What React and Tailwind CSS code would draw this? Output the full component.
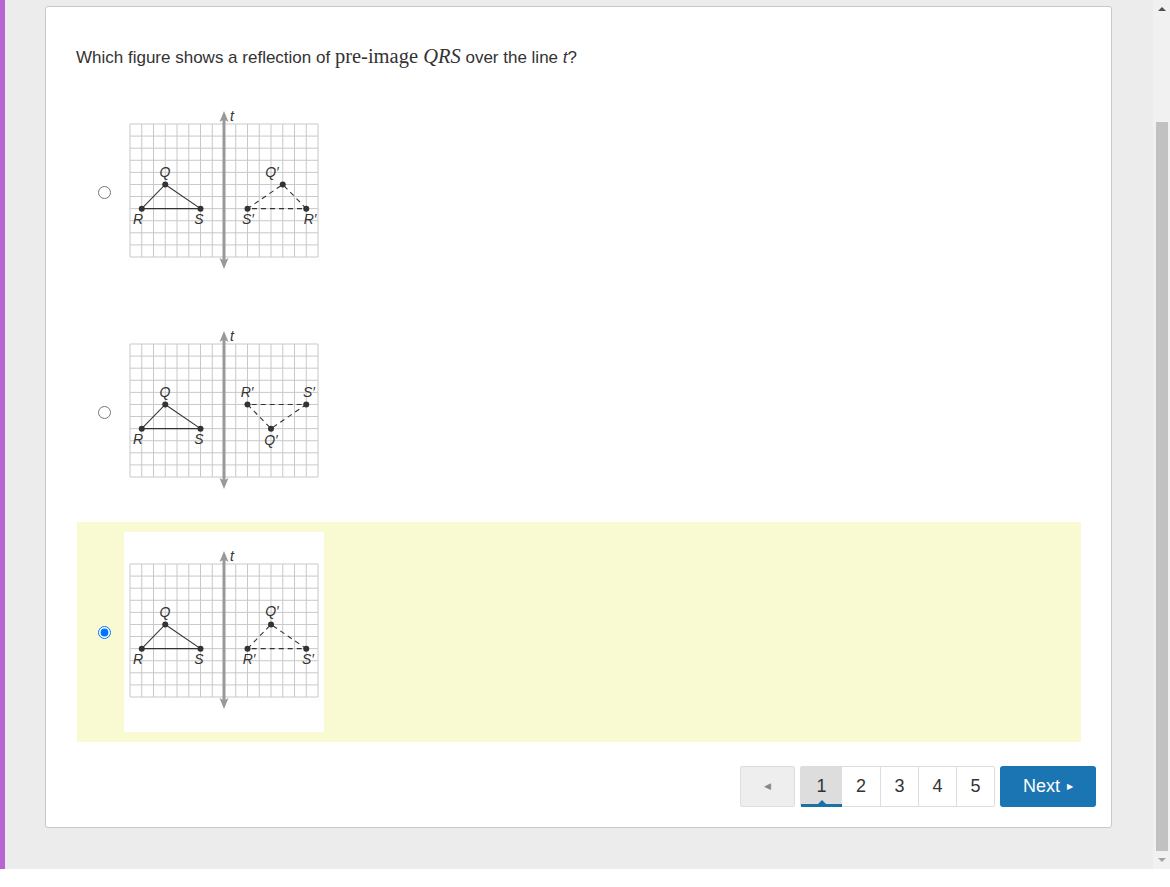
const CW = 11.75
const CH = 133 / 11
const X0 = 6
const Y0 = 32

const pt = (c, r) => [X0 + c * CW, Y0 + r * CH]

const LEFT = { R: [1, 7], Q: [3, 5], S: [6, 7] }

const OPTIONS = [
  {
    pts: { Q: [13, 5], R: [15, 7], S: [10, 7] },
    labels: { Q: [148, 80], R: [186, 127], S: [124, 127] },
  },
  {
    pts: { Q: [12, 7], R: [10, 5], S: [15, 5] },
    labels: { Q: [147, 128], R: [123, 80], S: [185, 80] },
  },
  {
    pts: { Q: [12, 5], R: [10, 7], S: [15, 7] },
    labels: { Q: [148, 79], R: [125, 127], S: [184, 127] },
  },
]

function Label({ x, y, children }) {
  return (
    <text
      x={x}
      y={y}
      textAnchor="middle"
      dominantBaseline="central"
      fontSize="14"
      fontStyle="italic"
      fill="#333"
      fontFamily="'Liberation Sans', Arial, sans-serif"
    >
      {children}
    </text>
  )
}

function Graph({ option }) {
  const cols = Array.from({ length: 17 }, (_, i) => i)
  const rows = Array.from({ length: 12 }, (_, i) => i)
  const [qx, qy] = pt(...LEFT.Q)
  const [rx, ry] = pt(...LEFT.R)
  const [sx, sy] = pt(...LEFT.S)
  const [q2x, q2y] = pt(...option.pts.Q)
  const [r2x, r2y] = pt(...option.pts.R)
  const [s2x, s2y] = pt(...option.pts.S)
  return (
    <svg width="200" height="200" viewBox="0 0 200 200" className="block bg-white">
      {cols.map((c) => (
        <line key={'c' + c} x1={X0 + c * CW} y1={Y0} x2={X0 + c * CW} y2={Y0 + 11 * CH} stroke="#c8c8c8" strokeWidth="1" />
      ))}
      {rows.map((r) => (
        <line key={'r' + r} x1={X0} y1={Y0 + r * CH} x2={X0 + 16 * CW} y2={Y0 + r * CH} stroke="#c8c8c8" strokeWidth="1" />
      ))}
      <line x1="100" y1="27" x2="100" y2="169" stroke="#999" strokeWidth="3" />
      <polygon points="100,19 95.5,30 100,27.5 104.5,30" fill="#999" />
      <polygon points="100,177 95.5,166 100,168.5 104.5,166" fill="#999" />
      <Label x={108} y={24}>t</Label>

      <polyline points={`${rx},${ry} ${qx},${qy} ${sx},${sy} ${rx},${ry}`} fill="none" stroke="#333" strokeWidth="1.1" />
      <polyline
        points={`${r2x},${r2y} ${q2x},${q2y} ${s2x},${s2y} ${r2x},${r2y}`}
        fill="none"
        stroke="#333"
        strokeWidth="1.1"
        strokeDasharray="5 4"
      />
      {[[qx, qy], [rx, ry], [sx, sy], [q2x, q2y], [r2x, r2y], [s2x, s2y]].map(([x, y], i) => (
        <circle key={i} cx={x} cy={y} r="3" fill="#333" />
      ))}
      <Label x={41} y={80}>Q</Label>
      <Label x={14} y={127}>R</Label>
      <Label x={75} y={127}>S</Label>
      <Label x={option.labels.Q[0]} y={option.labels.Q[1]}>Q′</Label>
      <Label x={option.labels.R[0]} y={option.labels.R[1]}>R′</Label>
      <Label x={option.labels.S[0]} y={option.labels.S[1]}>S′</Label>
    </svg>
  )
}

function Pagination() {
  return (
    <div className="flex justify-end items-stretch gap-[5px] pr-[15px] h-[41px] text-[18px] text-[#333]">
      <div className="w-[55px] flex items-center justify-center bg-[#eee] border border-[#ddd] rounded-[2px] text-[9px] text-[#888]">
        ◀
      </div>
      <div className="flex border border-[#ddd] rounded-[2px] bg-white">
        <div className="relative w-[41px] flex items-center justify-center bg-[#ddd]">
          1
          <div className="absolute left-0 right-0 bottom-[-1px] h-[3px] bg-[#1c70a8]" />
          <div className="absolute left-1/2 -translate-x-1/2 bottom-[2px] w-0 h-0 border-l-[4px] border-r-[4px] border-b-[4px] border-l-transparent border-r-transparent border-b-[#1c70a8]" />
        </div>
        {['2', '3', '4', '5'].map((n, i) => (
          <div
            key={n}
            className={`w-[38px] flex items-center justify-center ${i > 0 ? 'border-l border-[#ddd]' : ''}`}
          >
            {n}
          </div>
        ))}
      </div>
      <div className="w-[96px] flex items-center justify-center gap-[7px] bg-[#1b75b3] rounded-[3px] text-white">
        Next <span className="text-[8px]">▶</span>
      </div>
    </div>
  )
}

export default function App() {
  return (
    <div className="w-[1170px] h-[887px] bg-white overflow-hidden" style={{ fontFamily: "'Liberation Sans', Arial, sans-serif" }}>
      <div className="h-[869px] flex">
        <div className="w-[5px] bg-[#b763d2]" />
        <div className="flex-1 bg-[#ececec] pt-[6px] pl-[40px] pr-[41px]">
          <div className="bg-white border border-[#c8c8c8] rounded-[3px] pt-[39px] pb-[20px]">
            <div className="px-[30px] h-[24px] leading-[24px] text-[17px] text-[#333]">
              Which figure shows a reflection of{' '}
              <span className="text-[20.5px] leading-none" style={{ fontFamily: "'Liberation Serif', 'Times New Roman', serif" }}>
                pre-image <i>QRS</i>
              </span>{' '}
              over the line <i>t</i>?
            </div>
            <div className="ml-[31px] mr-[30px] mt-[12px]">
              {OPTIONS.map((opt, i) => (
                <label
                  key={i}
                  className={`h-[220px] flex items-center ${i === 2 ? 'bg-[#fafad2]' : ''}`}
                >
                  <div className="w-[47px] flex justify-center pl-[7px]">
                    <input type="radio" name="answer" defaultChecked={i === 2} className="m-0 w-[13px] h-[13px]" />
                  </div>
                  <Graph option={opt} />
                </label>
              ))}
            </div>
            <div className="mt-[24px]">
              <Pagination />
            </div>
          </div>
        </div>
        <div className="w-[17px] bg-[#f1f1f1] flex flex-col items-center">
          <div className="h-[17px] flex items-center justify-center">
            <div className="w-0 h-0 border-l-[4px] border-r-[4px] border-b-[4px] border-l-transparent border-r-transparent border-b-[#505050]" />
          </div>
          <div className="h-[105px]" />
          <div className="w-[12px] flex-1 bg-[#c1c1c1]" />
          <div className="h-[18px] flex items-center justify-center">
            <div className="w-0 h-0 border-l-[4px] border-r-[4px] border-t-[4px] border-l-transparent border-r-transparent border-t-[#a3a3a3]" />
          </div>
        </div>
      </div>
    </div>
  )
}
